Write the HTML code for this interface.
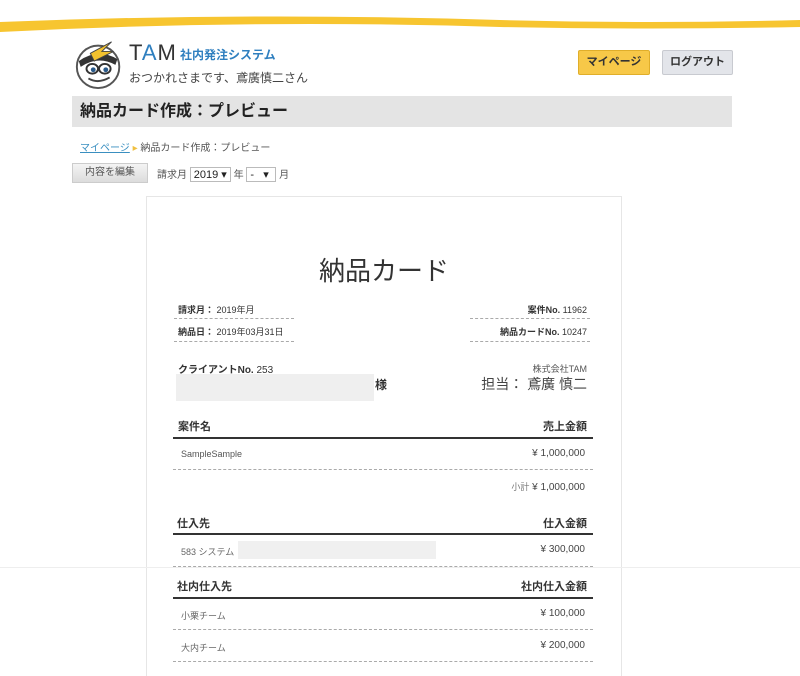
<!DOCTYPE html>
<html><head><meta charset="utf-8"><style>
*{margin:0;padding:0;box-sizing:border-box}
body{width:800px;height:669px;overflow:hidden;background:#fff;position:relative;font-family:"Liberation Sans","Noto Sans CJK JP",sans-serif;color:#333}
.a{position:absolute;white-space:nowrap}
.dash{position:absolute;border-top:1px dashed #aaa;height:0}
.thick{position:absolute;height:2px;background:#333}
.b{font-weight:bold}
</style></head><body>
<svg class="a" style="left:0;top:0" width="800" height="40"><path d="M0 22 Q250 12 500 20 Q650 24 800 20 L800 27 Q650 30 500 27 Q250 19 0 32 Z" fill="#f7c530"/></svg>
<svg class="a" style="left:72px;top:36px" width="56" height="54" viewBox="0 0 56 56">
<circle cx="26" cy="32" r="22" fill="#fff" stroke="#555" stroke-width="2"/>
<path d="M6 26 Q26 12 46 24 L44 30 Q26 20 8 32 Z" fill="#333"/>
<path d="M18 18 L40 6 L30 16 L42 16 L22 26 Z" fill="#f3c22e" stroke="#444" stroke-width="1"/>
<ellipse cx="20" cy="34" rx="6" ry="5" fill="#fff" stroke="#333" stroke-width="2"/>
<ellipse cx="33" cy="34" rx="6" ry="5" fill="#fff" stroke="#333" stroke-width="2"/>
<circle cx="21" cy="35" r="2.5" fill="#2a5a8a"/><circle cx="34" cy="35" r="2.5" fill="#2a5a8a"/>
<path d="M16 44 Q26 50 38 43" stroke="#444" stroke-width="2" fill="none"/>
</svg>
<div class="a" style="left:129px;top:40px;font-size:22px;color:#333;letter-spacing:1px">T<span style="color:#2f7fbf">A</span>M</div>
<div class="a b" style="left:180px;top:46px;font-size:12px;color:#2f7fbf">社内発注システム</div>
<div class="a" style="left:129px;top:69px;font-size:12px;color:#444">おつかれさまです、鳶廣慎二さん</div>
<div class="a b" style="left:578px;top:50px;width:72px;height:25px;background:#f7c848;border:1px solid #e0ae2a;border-radius:2px;font-size:11px;text-align:center;line-height:23px">マイページ</div>
<div class="a b" style="left:662px;top:50px;width:71px;height:25px;background:#e3e5ea;border:1px solid #c8cad0;border-radius:2px;font-size:11px;text-align:center;line-height:23px">ログアウト</div>
<div class="a b" style="left:72px;top:96px;width:660px;height:31px;background:#e4e4e4;font-size:16px;line-height:31px;padding-left:8px;color:#222">納品カード作成：プレビュー</div>
<div class="a" style="left:80px;top:139px;font-size:10px;color:#555"><span style="color:#3a8fc0;text-decoration:underline">マイページ</span> <span style="color:#f0c040">▸</span> 納品カード作成：プレビュー</div>
<div class="a" style="left:72px;top:163px;width:76px;height:20px;background:linear-gradient(#f4f4f4,#dcdcdc);border:1px solid #ccc;font-size:10px;text-align:center;line-height:18px;color:#555">内容を編集</div>
<div class="a" style="left:157px;top:166px;font-size:10px;color:#555">請求月 <span style="display:inline-block;border:1px solid #bbb;padding:0 3px;font-size:11px;color:#222">2019 ▾</span> 年 <span style="display:inline-block;border:1px solid #bbb;padding:0 3px;width:30px;font-size:11px;color:#222">-&nbsp;&nbsp; ▾</span> 月</div>
<div class="a" style="left:146px;top:196px;width:476px;height:480px;border:1px solid #e6e6e6;border-bottom:none"></div>
<div class="a" style="left:146px;top:251px;width:476px;text-align:center;font-size:26px;color:#333">納品カード</div>
<div class="a" style="left:178px;top:303px;font-size:9px"><span class="b">請求月：</span> 2019年月</div>
<div class="dash" style="left:174px;top:318px;width:120px"></div>
<div class="a" style="left:178px;top:325px;font-size:9px"><span class="b">納品日：</span> 2019年03月31日</div>
<div class="dash" style="left:174px;top:341px;width:120px"></div>
<div class="a" style="right:213px;top:303px;font-size:9px"><span class="b">案件No.</span> 11962</div>
<div class="dash" style="left:470px;top:318px;width:120px"></div>
<div class="a" style="right:213px;top:325px;font-size:9px"><span class="b">納品カードNo.</span> 10247</div>
<div class="dash" style="left:470px;top:341px;width:120px"></div>
<div class="a b" style="left:178px;top:361px;font-size:10px">クライアントNo. <span style="font-weight:normal">253</span></div>
<div class="a" style="left:176px;top:374px;width:198px;height:27px;background:#efefef"></div>
<div class="a b" style="left:375px;top:376px;font-size:12px">様</div>
<div class="a" style="right:213px;top:362px;font-size:9px;color:#555">株式会社TAM</div>
<div class="a" style="right:213px;top:374px;font-size:14px;color:#444">担当： 鳶廣 慎二</div>
<div class="a b" style="left:178px;top:418px;font-size:11px">案件名</div>
<div class="a b" style="right:213px;top:418px;font-size:11px">売上金額</div>
<div class="thick" style="left:173px;top:437px;width:420px"></div>
<div class="a" style="left:181px;top:449px;font-size:9px;color:#555">SampleSample</div>
<div class="a" style="right:215px;top:448px;font-size:10px;color:#444">¥ 1,000,000</div>
<div class="dash" style="left:173px;top:469px;width:420px"></div>
<div class="a" style="right:215px;top:480px;font-size:10px;color:#444"><span style="font-size:9px;color:#777">小計</span> ¥ 1,000,000</div>
<div class="a b" style="left:177px;top:515px;font-size:11px">仕入先</div>
<div class="a b" style="right:213px;top:515px;font-size:11px">仕入金額</div>
<div class="thick" style="left:173px;top:533px;width:420px"></div>
<div class="a" style="left:181px;top:545px;font-size:9px;color:#666">583 システム</div>
<div class="a" style="left:238px;top:541px;width:198px;height:18px;background:#f0f0f0"></div>
<div class="a" style="right:215px;top:544px;font-size:10px;color:#444">¥ 300,000</div>
<div class="dash" style="left:173px;top:566px;width:420px"></div>
<div class="a" style="left:0;top:567px;width:800px;height:1px;background:#eee"></div>
<div class="a b" style="left:177px;top:578px;font-size:11px">社内仕入先</div>
<div class="a b" style="right:213px;top:578px;font-size:11px">社内仕入金額</div>
<div class="thick" style="left:173px;top:597px;width:420px"></div>
<div class="a" style="left:181px;top:609px;font-size:9px;color:#666">小栗チーム</div>
<div class="a" style="right:215px;top:608px;font-size:10px;color:#444">¥ 100,000</div>
<div class="dash" style="left:173px;top:629px;width:420px"></div>
<div class="a" style="left:181px;top:641px;font-size:9px;color:#666">大内チーム</div>
<div class="a" style="right:215px;top:640px;font-size:10px;color:#444">¥ 200,000</div>
<div class="dash" style="left:173px;top:661px;width:420px"></div>
</body></html>
